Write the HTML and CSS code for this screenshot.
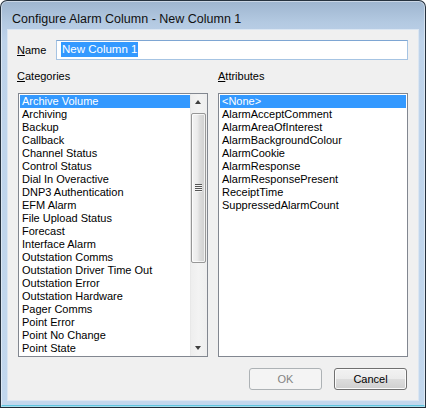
FILE: index.html
```html
<!DOCTYPE html>
<html>
<head>
<meta charset="utf-8">
<link rel="stylesheet" href="styles.css">
</head>
<body>
<div class="window">
  <div class="titlebar"><span class="title">Configure Alarm Column - New Column 1</span></div>
  <div class="client">
    <div class="name-row">
      <label class="name-label"><u>N</u>ame</label>
      <div class="textbox"><span class="sel">New Column 1</span></div>
    </div>
    <div class="lists">
      <div class="col">
        <div class="label"><u>C</u>ategories</div>
        <div class="listbox left">
          <div class="items">
            <div class="item selected">Archive Volume</div>
            <div class="item">Archiving</div>
            <div class="item">Backup</div>
            <div class="item">Callback</div>
            <div class="item">Channel Status</div>
            <div class="item">Control Status</div>
            <div class="item">Dial In Overactive</div>
            <div class="item">DNP3 Authentication</div>
            <div class="item">EFM Alarm</div>
            <div class="item">File Upload Status</div>
            <div class="item">Forecast</div>
            <div class="item">Interface Alarm</div>
            <div class="item">Outstation Comms</div>
            <div class="item">Outstation Driver Time Out</div>
            <div class="item">Outstation Error</div>
            <div class="item">Outstation Hardware</div>
            <div class="item">Pager Comms</div>
            <div class="item">Point Error</div>
            <div class="item">Point No Change</div>
            <div class="item">Point State</div>
          </div>
          <div class="scrollbar">
            <div class="arrow up"></div>
            <div class="thumb"><div class="grip"></div></div>
            <div class="track-rest"></div>
            <div class="arrow down"></div>
          </div>
        </div>
      </div>
      <div class="col">
        <div class="label label-right"><u>A</u>ttributes</div>
        <div class="listbox right">
          <div class="items full">
            <div class="item selected">&lt;None&gt;</div>
            <div class="item">AlarmAcceptComment</div>
            <div class="item">AlarmAreaOfInterest</div>
            <div class="item">AlarmBackgroundColour</div>
            <div class="item">AlarmCookie</div>
            <div class="item">AlarmResponse</div>
            <div class="item">AlarmResponsePresent</div>
            <div class="item">ReceiptTime</div>
            <div class="item">SuppressedAlarmCount</div>
          </div>
        </div>
      </div>
    </div>
    <div class="buttons">
      <div class="btn disabled">OK</div>
      <div class="btn">Cancel</div>
    </div>
  </div>
</div>
</body>
</html>
```

FILE: styles.css
```css
html, body {
  margin: 0;
  padding: 0;
  background: #ffffff;
}

.window {
  width: 426px;
  height: 408px;
  box-sizing: border-box;
  border: 1px solid #26323f;
  border-bottom-color: #1f2a36;
  border-radius: 7px 7px 0 0;
  background: linear-gradient(#9eb5cf 0px, #b4cae2 22px, #bed3ea 40px, #c2d7ed 100%);
  box-shadow: inset 0 0 0 1px rgba(255, 255, 255, 0.45), inset 0 -2px 0 #5fc4de;
  padding: 0 7px 7px 7px;
  display: flex;
  flex-direction: column;
  font-family: "Liberation Sans", Arial, sans-serif;
  font-size: 11px;
  color: #000;
}

.titlebar {
  height: 29px;
  display: flex;
  align-items: center;
  padding-left: 4px;
  box-sizing: border-box;
}

.title {
  font-family: "Liberation Sans", Arial, sans-serif;
  font-size: 12.5px;
  color: #111;
  position: relative;
  top: 3px;
}

.client {
  flex: 1;
  background: #f0f0f0;
  box-shadow: 0 0 0 1px #dbe6f2;
  padding: 10px 10px 10px 9px;
  display: flex;
  flex-direction: column;
}

.name-row {
  display: flex;
  align-items: center;
  height: 20px;
}

.name-label {
  width: 39px;
  line-height: 13px;
  padding-top: 1px;
}

.textbox {
  width: 352px;
  height: 20px;
  box-sizing: border-box;
  background: #fff;
  border: 1px solid #a6c4e3;
  border-top-color: #7ea6d3;
  padding: 1px 0 0 4px;
}

.sel {
  display: inline-block;
  background: #3399ff;
  color: #fff;
  height: 15px;
  line-height: 15px;
  padding: 0 1px 0 1px;
  font-size: 11.5px;
}

.lists {
  margin-top: 10px;
  display: grid;
  grid-template-columns: 191px 190px;
  column-gap: 10px;
}

.label {
  line-height: 13px;
  height: 13px;
  margin-bottom: 10px;
}

.listbox {
  height: 264px;
  box-sizing: border-box;
  border: 1px solid #828790;
  background: #fff;
  display: flex;
}

.listbox.left {
  margin-left: 1px;
}

.items {
  flex: 1;
  padding: 1px 0 1px 1px;
  overflow: hidden;
}

.items.full {
  padding: 1px;
}

.item {
  height: 13px;
  line-height: 13px;
  padding-left: 2px;
  white-space: nowrap;
  color: #000;
}

.item.selected {
  background: #3399ff;
  color: #fff;
}

.scrollbar {
  width: 17px;
  display: flex;
  flex-direction: column;
  background: linear-gradient(to right, #e2e2e2 0, #eeeeee 1px, #f3f3f3 50%, #eeeeee 100%);
}

.arrow {
  height: 17px;
  position: relative;
}

.arrow::after {
  content: "";
  position: absolute;
  left: 5px;
  width: 0;
  height: 0;
  border-left: 3.5px solid transparent;
  border-right: 3.5px solid transparent;
}

.arrow.up::after {
  top: 6px;
  border-bottom: 4px solid #3f3f3f;
}

.arrow.down::after {
  top: 7px;
  border-top: 4px solid #3f3f3f;
}

.thumb {
  margin: 2px 1px 0 1px;
  height: 150px;
  box-sizing: border-box;
  border: 1px solid #979797;
  border-radius: 2px;
  background: linear-gradient(to right, #f4f4f4 0, #ececec 40%, #dcdcdc 60%, #cfcfcf 100%);
  box-shadow: inset 0 0 0 1px rgba(255, 255, 255, 0.7);
  display: flex;
  align-items: center;
  justify-content: center;
}

.grip {
  width: 7px;
  height: 8px;
  background: repeating-linear-gradient(#555 0 1px, #f4f4f4 1px 2px);
}

.track-rest {
  flex: 1;
}

.buttons {
  margin-top: 11px;
  margin-right: 1px;
  display: flex;
  justify-content: flex-end;
  gap: 12px;
}

.btn {
  width: 73px;
  height: 22px;
  box-sizing: border-box;
  border: 1px solid #707070;
  border-radius: 3px;
  background: linear-gradient(#f2f2f2 0, #ebebeb 50%, #dddddd 50%, #cfcfcf 100%);
  box-shadow: inset 0 0 0 1px #fbfbfb;
  display: flex;
  align-items: center;
  justify-content: center;
  color: #000;
}

.btn.disabled {
  border-color: #adb2b5;
  background: #f4f4f4;
  box-shadow: none;
  color: #838383;
}
```
